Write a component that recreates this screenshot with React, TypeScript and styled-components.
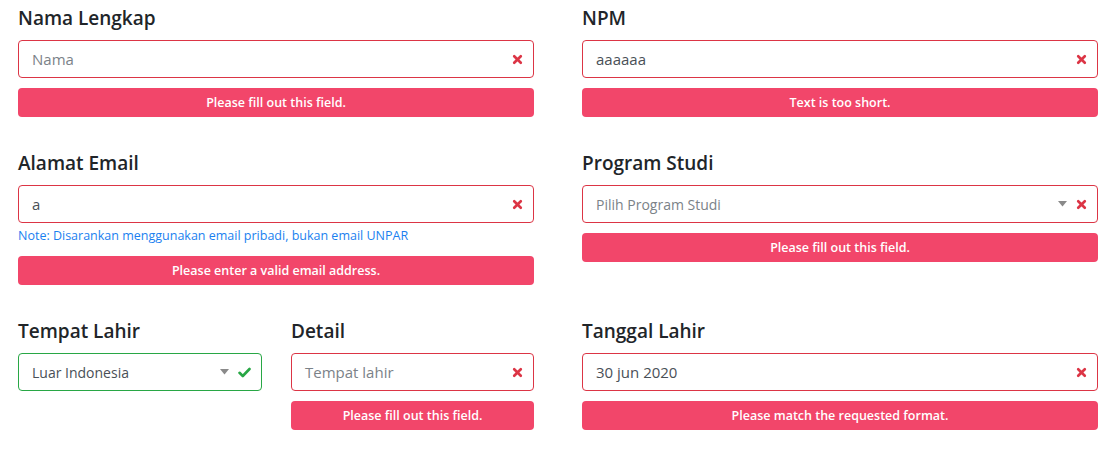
import React from "react";
import styled, { createGlobalStyle } from "styled-components";

const GlobalStyle = createGlobalStyle`
    body {
        margin: 0;
        background: #fff;
        font-family: "Open Sans", "Noto Sans", sans-serif;
    }
`

const Page = styled.div`
    display: grid;
    grid-template-columns: 1fr 1fr;
    column-gap: 48px;
    row-gap: 32px;
    padding: 4px 21px 0 18px;
    align-items: start;
`

const Split = styled.div`
    display: grid;
    grid-template-columns: 244px 1fr;
    column-gap: 29px;
    align-items: start;
`

const Group = styled.div`
    display: flex;
    flex-direction: column;
`

const Label = styled.div`
    font-size: 19px;
    line-height: 28px;
    font-weight: 600;
    color: #212529;
    margin-bottom: 8px;
`

const Field = styled.div<{ $valid?: boolean }>`
    box-sizing: border-box;
    height: 38px;
    display: flex;
    align-items: center;
    gap: 9px;
    padding: 0 10px 0 13px;
    border: 1px solid ${p => (p.$valid ? "#28a745" : "#dc3545")};
    border-radius: 4px;
    background: #fff;
`

const Value = styled.span<{ $placeholder?: boolean; $small?: boolean }>`
    flex: 1;
    font-size: ${p => (p.$small ? "14px" : "15px")};
    color: ${p => (p.$placeholder ? "#7b8288" : "#495057")};
    white-space: nowrap;
`

const Note = styled.div`
    font-size: 12.5px;
    line-height: 18px;
    color: #1a7ff0;
    margin-top: 4px;
`

const ErrorBar = styled.div<{ $gap?: number }>`
    margin-top: ${p => p.$gap ?? 10}px;
    height: 29px;
    border-radius: 4px;
    background: #f2466a;
    color: #fff;
    font-size: 12.5px;
    font-weight: 600;
    display: flex;
    align-items: center;
    justify-content: center;
`

const Cross = () => (
    <svg width="11" height="11" viewBox="0 0 10 10">
        <path d="M2 2 L8 8 M8 2 L2 8" stroke="#dc3545" strokeWidth="2.4" strokeLinecap="round" />
    </svg>
)

const Check = () => (
    <svg width="13" height="11" viewBox="0 0 13 11">
        <path d="M1.5 5.8 L4.8 9 L11.5 2" fill="none" stroke="#28a745" strokeWidth="2.6" strokeLinecap="round" strokeLinejoin="round" />
    </svg>
)

const Caret = () => (
    <svg width="9" height="6" viewBox="0 0 9 6">
        <path d="M0 0 H9 L4.5 5.5 Z" fill="#8a8a8a" />
    </svg>
)

function Input(props: { value: string; placeholder?: boolean; select?: boolean; valid?: boolean; small?: boolean }) {
    const { value, placeholder, select, valid, small } = props
    return (
        <Field $valid={valid}>
            <Value $placeholder={placeholder} $small={small}>{value}</Value>
            {select && <Caret />}
            {valid ? <Check /> : <Cross />}
        </Field>
    )
}

export default function App() {
    return (
        <>
            <GlobalStyle />
            <Page>
                <Group>
                    <Label>Nama Lengkap</Label>
                    <Input value="Nama" placeholder />
                    <ErrorBar>Please fill out this field.</ErrorBar>
                </Group>
                <Group>
                    <Label>NPM</Label>
                    <Input value="aaaaaa" />
                    <ErrorBar>Text is too short.</ErrorBar>
                </Group>
                <Group>
                    <Label>Alamat Email</Label>
                    <Input value="a" />
                    <Note>Note: Disarankan menggunakan email pribadi, bukan email UNPAR</Note>
                    <ErrorBar $gap={11}>Please enter a valid email address.</ErrorBar>
                </Group>
                <Group>
                    <Label>Program Studi</Label>
                    <Input value="Pilih Program Studi" placeholder select small />
                    <ErrorBar>Please fill out this field.</ErrorBar>
                </Group>
                <Split>
                    <Group>
                        <Label>Tempat Lahir</Label>
                        <Input value="Luar Indonesia" select valid small />
                    </Group>
                    <Group>
                        <Label>Detail</Label>
                        <Input value="Tempat lahir" placeholder />
                        <ErrorBar>Please fill out this field.</ErrorBar>
                    </Group>
                </Split>
                <Group>
                    <Label>Tanggal Lahir</Label>
                    <Input value="30 jun 2020" />
                    <ErrorBar>Please match the requested format.</ErrorBar>
                </Group>
            </Page>
        </>
    )
}
